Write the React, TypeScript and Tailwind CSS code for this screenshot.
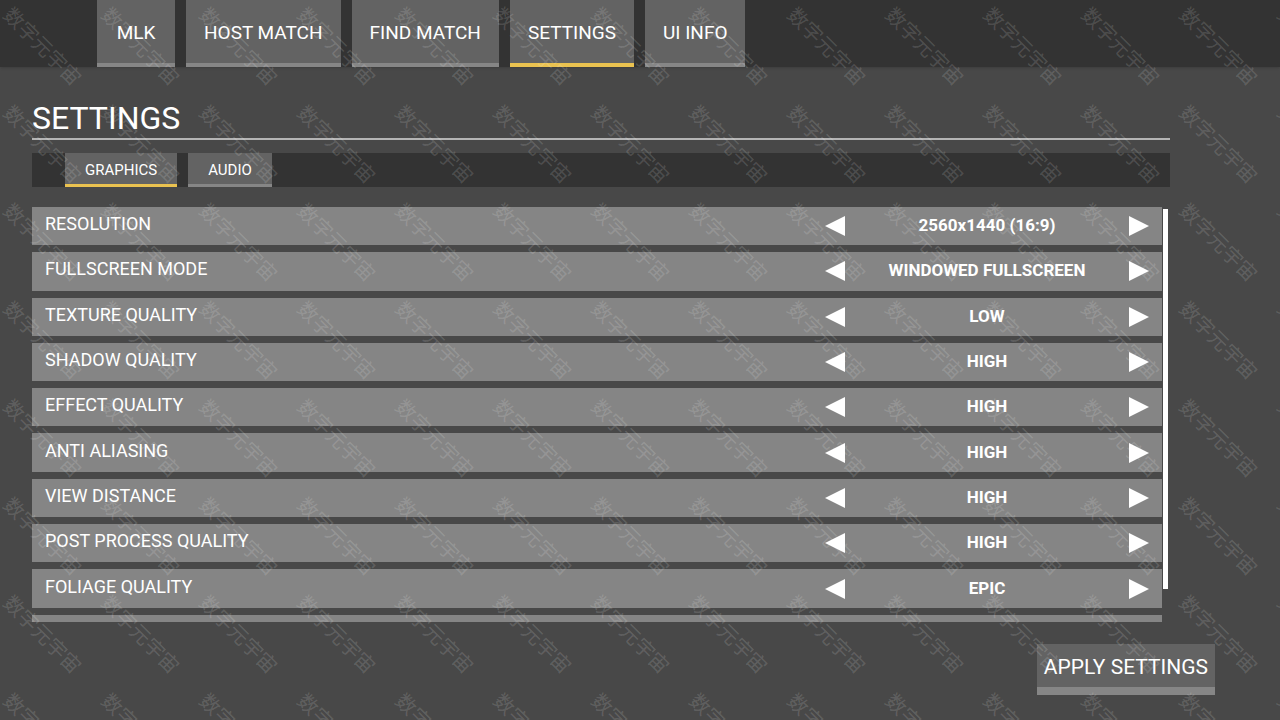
import { useState } from "react";
import clsx from "clsx";

interface Option {
  id: string;
  label: string;
  values: string[];
  initial: number;
}

const QUALITY = ["LOW", "MEDIUM", "HIGH", "EPIC"];

const PAGES = ["MLK", "HOST MATCH", "FIND MATCH", "SETTINGS", "UI INFO"];

const SECTIONS = ["GRAPHICS", "AUDIO"];

const OPTIONS: Option[] = [
  { id: "resolution", label: "RESOLUTION", values: ["1920x1080 (16:9)", "2560x1440 (16:9)"], initial: 1 },
  { id: "fullscreen", label: "FULLSCREEN MODE", values: ["FULLSCREEN", "WINDOWED FULLSCREEN", "WINDOWED"], initial: 1 },
  { id: "texture", label: "TEXTURE QUALITY", values: QUALITY, initial: 0 },
  { id: "shadow", label: "SHADOW QUALITY", values: QUALITY, initial: 2 },
  { id: "effect", label: "EFFECT QUALITY", values: QUALITY, initial: 2 },
  { id: "aliasing", label: "ANTI ALIASING", values: QUALITY, initial: 2 },
  { id: "distance", label: "VIEW DISTANCE", values: QUALITY, initial: 2 },
  { id: "post", label: "POST PROCESS QUALITY", values: QUALITY, initial: 2 },
  { id: "foliage", label: "FOLIAGE QUALITY", values: QUALITY, initial: 3 },
];

const Arrow = ({ direction }: { direction: "left" | "right" }) => (
  <svg viewBox="0 0 20 20" className="w-5 h-5 fill-white" aria-hidden="true">
    {direction === "left" ? <path d="M20 0v20L0 10z" /> : <path d="M0 0v20l20-10z" />}
  </svg>
);

const OptionRow = ({ option }: { option: Option }) => {
  const [index, setIndex] = useState(option.initial);
  const count = option.values.length;

  const move = (step: number) => {
    setIndex((prev) => (prev + step + count) % count);
  };

  return (
    <div
      role="group"
      aria-labelledby={option.id}
      className="flex items-center justify-between bg-[#858585] px-[13px]"
    >
      <span id={option.id} className="pb-1 text-[18px] leading-6">
        {option.label}
      </span>
      <div className="flex items-center w-[324px]">
        <button type="button" aria-label="Previous" onClick={() => move(-1)}>
          <Arrow direction="left" />
        </button>
        <span className="flex-1 pb-0.5 text-center text-[17px] leading-6 font-bold">
          {option.values[index]}
        </span>
        <button type="button" aria-label="Next" onClick={() => move(1)}>
          <Arrow direction="right" />
        </button>
      </div>
    </div>
  );
};

const Watermark = () => (
  <div
    aria-hidden="true"
    className="absolute inset-0 overflow-hidden pointer-events-none select-none"
  >
    <div className="-mt-[3px] -ml-1.5 grid grid-cols-[repeat(14,98px)] auto-rows-[98px]">
      {Array.from({ length: 112 }, (_, i) => (
        <span
          key={i}
          className="flex items-center justify-center rotate-45 whitespace-nowrap text-[20px] leading-6 text-white/15 font-['Noto_Sans_CJK_SC',sans-serif]"
        >
          数字元宇宙
        </span>
      ))}
    </div>
  </div>
);

export default function App() {
  const [page, setPage] = useState("SETTINGS");
  const [section, setSection] = useState("GRAPHICS");

  return (
    <div className="relative min-h-screen overflow-hidden bg-[#484848] text-white font-[Roboto,sans-serif]">
      <nav className="flex gap-[11px] bg-[#333333] pl-[97px] shadow-sm">
        {PAGES.map((item) => (
          <button
            key={item}
            type="button"
            onClick={() => setPage(item)}
            className={clsx(
              "h-[67px] min-w-[78px] px-[18px] pt-0.5 border-b-4 bg-[#636363] text-[19px] leading-6",
              page === item ? "border-[#eac250]" : "border-[#868686]"
            )}
          >
            {item}
          </button>
        ))}
      </nav>

      <main className="pt-8 pl-8">
        <div className="mr-[110px]">
          <h1 className="py-px border-b-2 border-[#b4b4b4] text-[32px] leading-[37px]">SETTINGS</h1>

          <div className="mt-[13px] flex gap-[11px] bg-[#333333] pl-[33px]">
            {SECTIONS.map((item) => (
              <button
                key={item}
                type="button"
                onClick={() => setSection(item)}
                className={clsx(
                  "h-[34px] px-5 pt-0.5 border-b-3 bg-[#636363] text-[15px] leading-5",
                  section === item ? "border-[#eac250]" : "border-[#868686]"
                )}
              >
                {item}
              </button>
            ))}
          </div>

          <div className="mt-5 flex gap-px">
            <div className="flex-1 h-[415px] overflow-hidden">
              <div className="grid h-[446px] auto-rows-fr gap-[7px]">
                {OPTIONS.map((option) => (
                  <OptionRow key={option.id} option={option} />
                ))}
                <div className="bg-[#858585]" />
              </div>
            </div>
            <div className="w-[7px] py-0.5 pr-0.5">
              <div className="h-[380px] bg-white" />
            </div>
          </div>
        </div>

        <div className="mt-[22px] mr-[65px] flex justify-end">
          <button
            type="button"
            className="h-[51px] px-[7px] pt-0.5 border-b-8 border-[#868686] bg-[#636363] text-[21px] leading-6"
          >
            APPLY SETTINGS
          </button>
        </div>
      </main>

      <Watermark />
    </div>
  );
}
